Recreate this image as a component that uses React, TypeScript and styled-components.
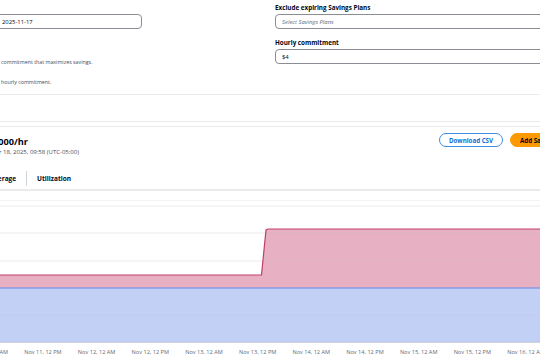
import styled, { createGlobalStyle } from "styled-components";

const GlobalStyle = createGlobalStyle`
  html, body {
    margin: 0;
    padding: 0;
    background: #ffffff;
    overflow: hidden;
    width: 540px;
    height: 360px;
  }
  body {
    font-family: "Open Sans", "Noto Sans", Arial, sans-serif;
    color: #000716;
  }
`;

const Page = styled.div`
  width: 540px;
  height: 360px;
  overflow: hidden;
`;

const FormGrid = styled.section`
  display: grid;
  grid-template-columns: 142px 1fr;
  column-gap: 133px;
  height: 95px;
  border-bottom: 1px solid #e9ebed;
  box-sizing: border-box;
  padding-top: 4px;
`;

const Column = styled.div`
  display: flex;
  flex-direction: column;
  min-width: 0;
`;

const Label = styled.div<{ $top?: number; $hidden?: boolean }>`
  font-size: 6.3px;
  font-weight: 700;
  line-height: 8px;
  height: 8px;
  margin-top: ${(p) => p.$top ?? 0}px;
  margin-bottom: 2px;
  white-space: nowrap;
  visibility: ${(p) => (p.$hidden ? "hidden" : "visible")};
`;

const Input = styled.div<{ $placeholder?: boolean; $bleed?: number }>`
  height: 15px;
  box-sizing: border-box;
  border: 1px solid #8c8c94;
  border-radius: 4px;
  margin-left: ${(p) => (p.$bleed ? -p.$bleed : 0)}px;
  margin-right: ${(p) => (p.$bleed ? 0 : -20)}px;
  padding-left: ${(p) => (p.$bleed ? p.$bleed + 1 : 6)}px;
  display: flex;
  align-items: center;
  font-size: 5.9px;
  color: ${(p) => (p.$placeholder ? "#5f6b7a" : "#000716")};
  font-style: ${(p) => (p.$placeholder ? "italic" : "normal")};
  white-space: nowrap;
`;

const Helper = styled.div<{ $top: number }>`
  font-size: 5.3px;
  line-height: 7px;
  color: #414d5c;
  margin-top: ${(p) => p.$top}px;
  padding-left: 1px;
  white-space: nowrap;
`;

const Footer = styled.div`
  height: 26px;
  border-bottom: 1px solid #e9ebed;
`;

const Card = styled.section`
  margin-top: 4px;
  border-top: 1px solid #e9ebed;
`;

const Header = styled.div`
  display: flex;
  align-items: flex-start;
  padding-top: 6px;
`;

const HeaderText = styled.div`
  flex: 1;
  min-width: 0;
  padding-top: 3px;
`;

const Title = styled.h2`
  margin: 0;
  font-size: 9.2px;
  line-height: 11px;
  font-weight: 700;
  white-space: nowrap;
  text-indent: -15px;
`;

const Subtitle = styled.div`
  font-size: 6px;
  line-height: 10px;
  color: #414d5c;
  white-space: nowrap;
  text-indent: -28px;
`;

const Actions = styled.div`
  display: flex;
  gap: 7px;
  margin-right: -60px;
`;

const Button = styled.button<{ $primary?: boolean }>`
  height: 14px;
  box-sizing: border-box;
  border-radius: 8px;
  padding: 0;
  font-family: inherit;
  font-size: 6.2px;
  font-weight: 700;
  display: flex;
  align-items: center;
  justify-content: ${(p) => (p.$primary ? "flex-start" : "center")};
  width: ${(p) => (p.$primary ? 90 : 64)}px;
  padding-left: ${(p) => (p.$primary ? 9 : 0)}px;
  border: ${(p) => (p.$primary ? "1px solid #ff9900" : "1px solid #3d8fe0")};
  background: ${(p) => (p.$primary ? "#ff9900" : "#ffffff")};
  color: ${(p) => (p.$primary ? "#000716" : "#0972d3")};
  white-space: nowrap;
`;

const Tabs = styled.div`
  display: flex;
  align-items: center;
  height: 22px;
  margin-top: 10px;
  border-bottom: 2px solid #e9ebed;
`;

const Tab = styled.div<{ $bleed?: number }>`
  font-size: 6.5px;
  font-weight: 700;
  color: #000716;
  padding: 0 10px;
  margin-left: ${(p) => (p.$bleed ? -p.$bleed : 0)}px;
  white-space: nowrap;
`;

const TabDivider = styled.div`
  width: 1px;
  height: 15px;
  background: #d1d5db;
`;

const ChartWrap = styled.div`
  margin-top: 9px;
  border-top: 1px solid #f2f3f3;
  height: 160px;
`;

const AxisLabel = styled.text`
  font-family: "Open Sans", "Noto Sans", Arial, sans-serif;
  font-size: 5.6px;
  fill: #5f6b7a;
`;

const ticks = [
  "Nov 11, 12 AM",
  "Nov 11, 12 PM",
  "Nov 12, 12 AM",
  "Nov 12, 12 PM",
  "Nov 13, 12 AM",
  "Nov 13, 12 PM",
  "Nov 14, 12 AM",
  "Nov 14, 12 PM",
  "Nov 15, 12 AM",
  "Nov 15, 12 PM",
  "Nov 16, 12 AM",
];

const grid = [5, 32, 60, 87, 114, 141];

function Chart() {
  const blueTop = 87;
  const bottom = 141;
  const redPath = `M-10 74 L261.5 74 L266 29 L268 28 L560 28`;
  return (
    <svg width="540" height="159" viewBox="0 0 540 159">
      {grid.map((y) => (
        <line key={y} x1="0" x2="540" y1={y} y2={y} stroke="#e9ebed" strokeWidth="1" />
      ))}
      <path d={`${redPath} L560 ${blueTop} L-10 ${blueTop} Z`} fill="#c33d69" fillOpacity="0.4" />
      <rect x="0" y={blueTop} width="540" height={bottom - blueTop} fill="#688ae8" fillOpacity="0.4" />
      {grid.slice(1, 5).map((y) => (
        <line key={y} x1="0" x2="540" y1={y} y2={y} stroke="#ffffff" strokeOpacity="0.18" strokeWidth="1" />
      ))}
      <path d={redPath} fill="none" stroke="#c33d69" strokeWidth="1.2" />
      <line x1="0" x2="540" y1={blueTop} y2={blueTop} stroke="#688ae8" strokeWidth="1" />
      <line x1="0" x2="540" y1={bottom + 0.5} y2={bottom + 0.5} stroke="#d1d5db" strokeWidth="1" />
      {ticks.map((t, i) => (
        <AxisLabel key={t} x={-10.7 + 53.67 * i} y="153" textAnchor="middle">
          {t}
        </AxisLabel>
      ))}
    </svg>
  );
}

export default function App() {
  return (
    <>
      <GlobalStyle />
      <Page>
        <FormGrid>
          <Column>
            <Label $hidden>Date range</Label>
            <Input $bleed={20}>2025-11-17</Input>
            <Helper $top={30}>commitment that maximizes savings.</Helper>
            <Helper $top={13}>hourly commitment.</Helper>
          </Column>
          <Column>
            <Label>Exclude expiring Savings Plans</Label>
            <Input $placeholder>Select Savings Plans</Input>
            <Label $top={10}>Hourly commitment</Label>
            <Input>$4</Input>
          </Column>
        </FormGrid>
        <Footer />
        <Card>
          <Header>
            <HeaderText>
              <Title>$4.000/hr</Title>
              <Subtitle>November 18, 2025, 09:58 (UTC-05:00)</Subtitle>
            </HeaderText>
            <Actions>
              <Button>Download CSV</Button>
              <Button $primary>Add Savings Plans</Button>
            </Actions>
          </Header>
          <Tabs>
            <Tab $bleed={24}>Coverage</Tab>
            <TabDivider />
            <Tab>Utilization</Tab>
          </Tabs>
          <ChartWrap>
            <Chart />
          </ChartWrap>
        </Card>
      </Page>
    </>
  );
}
